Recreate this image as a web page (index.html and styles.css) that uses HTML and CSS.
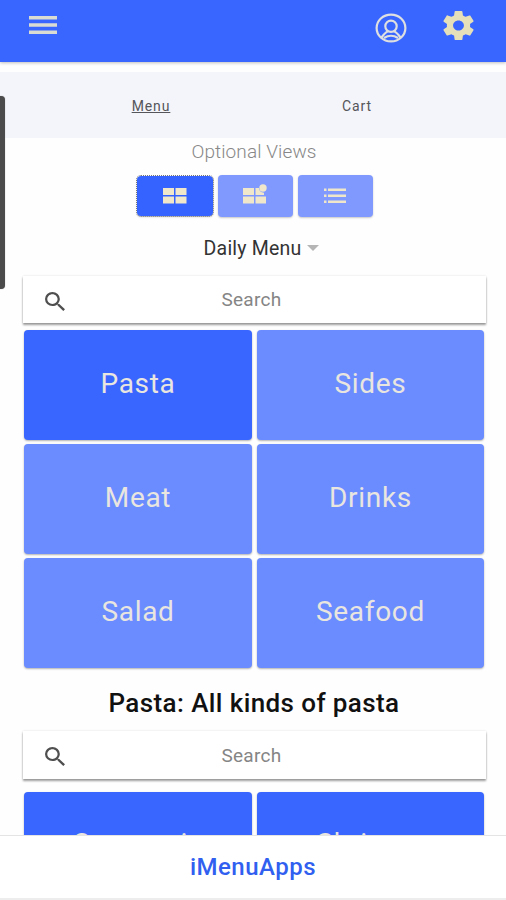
FILE: index.html
```
<!DOCTYPE html>
<html lang="en">
<head>
<meta charset="utf-8">
<title>iMenuApps</title>
<link rel="stylesheet" href="styles.css">
</head>
<body>
<div class="app">
  <header class="topbar">
    <svg class="burger" viewBox="0 0 28 19"><path d="M0 0h28v3.5H0zM0 7.3h28v3.5H0zM0 14.6h28v3.5H0z"/></svg>
    <svg class="user" viewBox="0 0 32 30"><ellipse cx="16" cy="15" rx="14.4" ry="13.4"/><ellipse cx="16" cy="13.2" rx="5.7" ry="5.6"/><path d="M6.500 24.500Q10 19.500 13 18.200M25.500 24.500Q22 19.500 19 18.200M9 25Q16 20.500 23 25"/></svg>
    <svg class="gear" viewBox="2 2 20 20" preserveAspectRatio="none"><path d="M19.43 12.98c.04-.32.07-.64.07-.98s-.03-.66-.07-.98l2.11-1.65c.19-.15.24-.42.12-.64l-2-3.46c-.12-.22-.39-.3-.61-.22l-2.49 1c-.52-.4-1.08-.73-1.69-.98l-.38-2.65C14.46 2.18 14.25 2 14 2h-4c-.25 0-.46.18-.49.42l-.38 2.65c-.61.25-1.17.59-1.69.98l-2.49-1c-.23-.09-.49 0-.61.22l-2 3.46c-.13.22-.07.49.12.64l2.11 1.65c-.04.32-.07.65-.07.98s.03.66.07.98l-2.11 1.65c-.19.15-.24.42-.12.64l2 3.46c.12.22.39.3.61.22l2.49-1c.52.4 1.08.73 1.69.98l.38 2.65c.03.24.24.42.49.42h4c.25 0 .46-.18.49-.42l.38-2.65c.61-.25 1.17-.59 1.69-.98l2.49 1c.23.09.49 0 .61-.22l2-3.46c.12-.22.07-.49-.12-.64l-2.11-1.65zM12 15.5c-1.93 0-3.5-1.57-3.5-3.5s1.57-3.5 3.5-3.5 3.5 1.57 3.5 3.5-1.57 3.5-3.5 3.5z"/></svg>
  </header>
  <nav class="tabs"><a class="tab current">Menu</a><a class="tab">Cart</a></nav>
  <main class="content">
    <p class="views-label">Optional Views</p>
    <div class="views">
      <button class="view on"><svg viewBox="0 0 24 17"><path d="M0 1h11v7H0zM12.5 1h11v7h-11zM0 9.5h11v7H0zM12.5 9.5h11v7h-11z"/></svg></button>
      <button class="view"><svg viewBox="0 0 24 17"><path d="M0 1h11v7H0zM12.5 1h3.5q0 4 5 4.7V8h-8.500zM0 9.500h11v7H0zM12.500 9.500h10.500v7h-10.500z"/><circle cx="20" cy="1" r="3.700"/></svg></button>
      <button class="view"><svg viewBox="0 0 24 17"><path d="M1 1.500h2.500v2.500H1zM5 1.500h18v2.500H5zM1 7.500h2.500v2.500H1zM5 7.500h18v2.500H5zM1 13.500h2.500v2.500H1zM5 13.500h18v2.500H5z"/></svg></button>
    </div>
    <div class="select"><span>Daily Menu</span><i class="caret"></i></div>
    <div class="search"><svg viewBox="3 3 17.500 17.500" preserveAspectRatio="none"><path d="M15.500 14h-.79l-.28-.27A6.471 6.471 0 0 0 16 9.500 6.500 6.500 0 1 0 9.500 16c1.610 0 3.090-.59 4.230-1.570l.27.28v.79l5 4.990L20.490 19l-4.990-5zm-6 0C7.010 14 5 11.990 5 9.500S7.010 5 9.500 5 14 7.010 14 9.500 11.990 14 9.500 14z"/></svg><span>Search</span></div>
    <div class="grid">
      <div class="tile on"><span>Pasta</span></div><div class="tile"><span>Sides</span></div>
      <div class="tile"><span>Meat</span></div><div class="tile"><span>Drinks</span></div>
      <div class="tile"><span>Salad</span></div><div class="tile"><span>Seafood</span></div>
    </div>
    <h2 class="heading">Pasta: All kinds of pasta</h2>
    <div class="search second"><svg viewBox="3 3 17.500 17.500" preserveAspectRatio="none"><path d="M15.500 14h-.79l-.28-.27A6.471 6.471 0 0 0 16 9.500 6.500 6.500 0 1 0 9.500 16c1.610 0 3.090-.59 4.230-1.570l.27.28v.79l5 4.990L20.490 19l-4.990-5zm-6 0C7.010 14 5 11.990 5 9.500S7.010 5 9.500 5 14 7.010 14 9.500 11.990 14 9.500 14z"/></svg><span>Search</span></div>
    <div class="grid items">
      <div class="tile on"><span>Campania</span></div><div class="tile on"><span>Shrimps</span></div>
    </div>
  </main>
  <footer class="footer"><span>iMenuApps</span></footer>
  <div class="scroll-handle"></div>
</div>
</body>
</html>
```
FILE: styles.css
```
* { box-sizing: border-box; }
body { margin: 0; font-family: Roboto, "Liberation Sans", sans-serif; background: #fefefe; overflow: hidden; }
.app { position: relative; width: 506px; height: 900px; display: flex; flex-direction: column; overflow: hidden; }
.topbar { height: 62px; flex: none; display: flex; align-items: flex-start; background: #3866ff; box-shadow: 0 1px 3px rgba(0,0,0,.25); fill: #e4dfc4; }
.burger { width: 28px; height: 19px; margin: 16px 0 0 29px; fill: #d9dcd3; }
.user { width: 32px; height: 30px; margin: 13px 0 0 318px; fill: none; stroke: #dedfe0; stroke-width: 2.2; }
.gear { width: 31px; height: 29px; margin: 11px 0 0 36px; fill: #e5dfba; }
.tabs { height: 66px; flex: none; margin-top: 10px; padding: 0 46px 0 48px; display: grid; grid-template-columns: 1fr 1fr; background: #f4f5fa; }
.tab { padding-top: 25px; text-align: center; font-size: 14px; line-height: 18px; letter-spacing: .9px; color: #55565a; }
.current { text-decoration: underline; }
.content { height: 697px; flex: none; overflow: hidden; padding: 0 21px 0 23px; }
.views-label { margin: 3px 0 0; text-align: center; font-size: 19px; line-height: 22px; font-weight: 300; color: #888; letter-spacing: .1px; }
.views { display: flex; justify-content: center; gap: 5px; margin: 12px 0 0 1px; }
.view { width: 75px; height: 42px; border: 0; padding: 0 0 1px; border-radius: 4px; background: #7f99ff; box-shadow: 0 1px 2px rgba(0,0,0,.22); display: flex; align-items: center; justify-content: center; }
.view.on { width: 76px; height: 40px; margin-top: 1px; background: #3563ff; outline: 1px dotted #777; }
.view svg { width: 24px; height: 17px; fill: #f0e7cb; overflow: visible; }
.select { display: flex; align-items: center; justify-content: center; gap: 6px; margin: 19px 0 0 15px; height: 24px; font-size: 19.500px; letter-spacing: .2px; color: #333; }
.caret { border: 6px solid transparent; border-top-color: #b5b5b5; border-bottom: 0; }
.search { position: relative; width: 463px; height: 47px; margin-top: 16px; display: flex; align-items: center; justify-content: center; background: #fff; box-shadow: 0 2px 2px rgba(0,0,0,.38), 0 0 2px rgba(0,0,0,.12); color: #858585; font-size: 19px; letter-spacing: .3px; }
.search svg { position: absolute; left: 22px; top: 16px; width: 20px; height: 19px; fill: #4f4f4f; }
.search span { margin-right: 6px; }
.grid { display: grid; grid-template-columns: 228px 227px; grid-auto-rows: 110px; gap: 4px 5px; margin: 7px 0 0 1px; }
.tile { display: flex; align-items: center; justify-content: center; padding-bottom: 4px; border-radius: 4px; background: #6a8cff; box-shadow: 0 1px 2px rgba(0,0,0,.3); color: #e9e5df; font-size: 28px; letter-spacing: .7px; }
.tile.on { background: #3866ff; }
.heading { margin: 20px 0 0; text-align: center; font-size: 26px; line-height: 30px; font-weight: 500; letter-spacing: .4px; color: #111; }
.search.second { margin-top: 13px; height: 48px; }
.items { margin-top: 13px; }
.items .tile { padding-bottom: 8px; }
.footer { height: 65px; flex: none; display: flex; align-items: center; justify-content: center; border-top: 1px solid #e4e4e4; border-bottom: 2px solid #ededed; background: #fff; color: #315fef; font-size: 24px; font-weight: 500; letter-spacing: .5px; }
.scroll-handle { position: absolute; left: -6px; top: 96px; width: 11px; height: 193px; border-radius: 4px; background: #4b4b4b; box-shadow: 0 0 1px #888; }
```
